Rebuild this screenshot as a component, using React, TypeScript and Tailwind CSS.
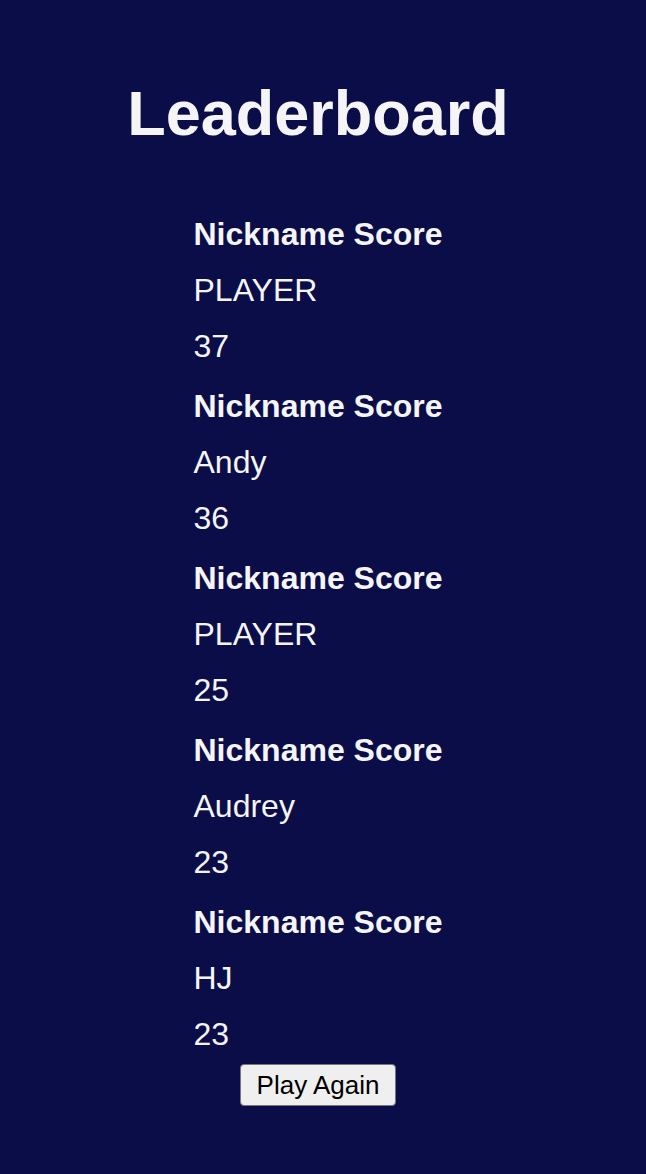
import React from 'react';

interface Entry {
  nickname: string;
  score: number;
}

const entries: Entry[] = [
  { nickname: 'PLAYER', score: 37 },
  { nickname: 'Andy', score: 36 },
  { nickname: 'PLAYER', score: 25 },
  { nickname: 'Audrey', score: 23 },
  { nickname: 'HJ', score: 23 },
];

const App: React.FC = () => {
  return (
    <div className="min-h-[1174px] w-full bg-[#0a0d47] text-[#f5f5f7] font-['Liberation_Sans',Arial,sans-serif]">
      <div className="w-[636px] flex flex-col items-center pt-[77px]">
        <h1 className="text-[63px] leading-[72px] font-bold">Leaderboard</h1>

        <div className="w-fit mt-[57px] flex flex-col gap-[4px]">
          {entries.map((entry, i) => (
            <div key={i} className="flex flex-col">
              <div className="text-[32px] leading-[56px] font-bold">Nickname Score</div>
              <div className="text-[32px] leading-[56px]">{entry.nickname}</div>
              <div className="text-[32px] leading-[56px]">{entry.score}</div>
            </div>
          ))}
        </div>

        <button
          type="button"
          className="mt-[2px] h-[42px] px-[16px] bg-[#efefef] text-black text-[26px] leading-[30px] border border-[#767676] rounded-[4px]"
        >
          Play Again
        </button>
      </div>
    </div>
  );
};

export default App;
